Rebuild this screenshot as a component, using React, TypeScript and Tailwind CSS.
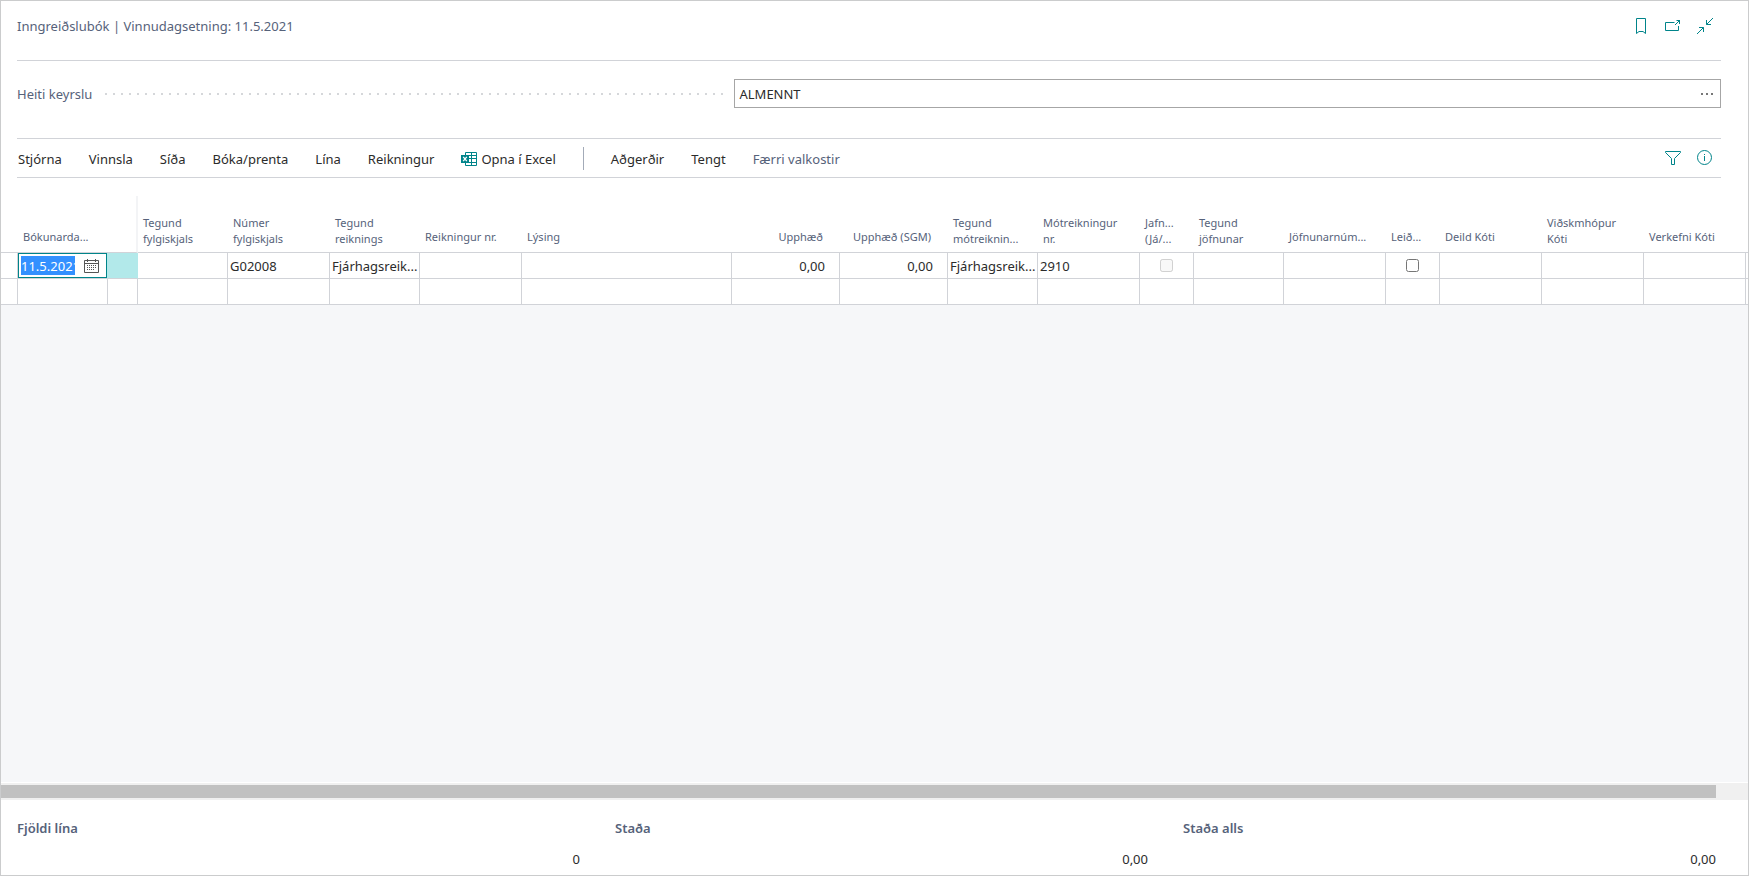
import React from 'react';

interface Column {
  width: string;
  lines: string[];
  align?: 'right';
}

const columns: Column[] = [
  { width: 'w-[90px]', lines: ['Bókunarda...'] },
  { width: 'w-[30px]', lines: [] },
  { width: 'w-[90px]', lines: ['Tegund', 'fylgiskjals'] },
  { width: 'w-[102px]', lines: ['Númer', 'fylgiskjals'] },
  { width: 'w-[90px]', lines: ['Tegund', 'reiknings'] },
  { width: 'w-[102px]', lines: ['Reikningur nr.'] },
  { width: 'w-[210px]', lines: ['Lýsing'] },
  { width: 'w-[108px]', lines: ['Upphæð'], align: 'right' },
  { width: 'w-[108px]', lines: ['Upphæð (SGM)'], align: 'right' },
  { width: 'w-[90px]', lines: ['Tegund', 'mótreiknin...'] },
  { width: 'w-[102px]', lines: ['Mótreikningur', 'nr.'] },
  { width: 'w-[54px]', lines: ['Jafn...', '(Já/...'] },
  { width: 'w-[90px]', lines: ['Tegund', 'jöfnunar'] },
  { width: 'w-[102px]', lines: ['Jöfnunarnúm...'] },
  { width: 'w-[54px]', lines: ['Leið...'] },
  { width: 'w-[102px]', lines: ['Deild Kóti'] },
  { width: 'w-[102px]', lines: ['Viðskmhópur', 'Kóti'] },
  { width: 'w-[102px]', lines: ['Verkefni Kóti'] },
];

const totals = [
  { label: 'Fjöldi lína', value: '0' },
  { label: 'Staða', value: '0,00' },
  { label: 'Staða alls', value: '0,00' },
];

const iconProps = { fill: 'none', stroke: 'currentColor', strokeWidth: 1 };

const BookmarkIcon = () => (
  <svg width="16" height="16" viewBox="0 0 16 16" {...iconProps}>
    <path d="M3.5.5h9v15L10 13.5H6l-2.5 2z" />
  </svg>
);

const OpenIcon = () => (
  <svg width="16" height="16" viewBox="0 0 16 16" {...iconProps}>
    <path d="M9.5 4.5h-9v8h13V8M10 7l5-5M11.5 2.5h3V6" />
  </svg>
);

const CollapseIcon = () => (
  <svg width="16" height="16" viewBox="0 0 16 16" {...iconProps}>
    <path d="M16 0L9.5 6.5M9.5 2v4.5H14M0 16l6.500-6.500M2 9.5h4.5V14" />
  </svg>
);

const FilterIcon = () => (
  <svg width="16" height="16" viewBox="0 0 16 16" {...iconProps}>
    <path d="M.5 1.5h15v1l-6 6v6h-3v-6l-6-6z" />
  </svg>
);

const InfoIcon = () => (
  <svg width="16" height="16" viewBox="0 0 16 16" {...iconProps}>
    <circle cx="7.500" cy="7.500" r="7" />
    <path d="M7.5 6v5M7.5 4v1" />
  </svg>
);

const ExcelIcon = () => (
  <svg width="16" height="14" viewBox="0 0 16 14" className="text-[#00848a]">
    <path d="M4.5.5h11v13h-11zM4.5 3.500h11M4.5 6.500h11M4.5 10.5h11M10.5.5v13" {...iconProps} />
    <path d="M0 3h8v8H0z" fill="currentColor" />
    <path d="M2.2 4.8l3.6 4.400M5.8 4.800L2.200 9.200" stroke="#fff" strokeWidth="1.3" />
  </svg>
);

const CalendarIcon = () => (
  <svg width="16" height="14" viewBox="0 0 16 14" fill="none" stroke="#555">
    <path d="M.5 1.5h14v12H.5zM.5 4.5h14M3.5 0v3M11.5 0v3" />
    <path d="M3 6.5h10M3 8.5h10M3 10.5h8" strokeDasharray="1 1" />
  </svg>
);

interface MenuButtonProps {
  children: React.ReactNode;
  muted?: boolean;
}

const MenuButton: React.FC<MenuButtonProps> = ({ children, muted }) => (
  <button className={muted ? 'flex items-center gap-1 text-[#56627a]' : 'flex items-center gap-1'}>{children}</button>
);

interface IconButtonProps {
  label: string;
  children: React.ReactNode;
}

const IconButton: React.FC<IconButtonProps> = ({ label, children }) => (
  <button aria-label={label} className="text-[#00848a]">
    {children}
  </button>
);

const cell = 'h-[26px] border-r border-b border-[#d1d3d8] p-0 px-[2px] whitespace-nowrap';
const highlighted = 'h-[26px] border-r border-b border-r-[#b2e9ea] border-b-[#d1d3d8] bg-[#b2e9ea] p-0';

const JournalLines = () => (
  <table className="w-full table-fixed border-separate border-spacing-0">
    <colgroup>
      <col className="w-[17px]" />
      {columns.map((c, i) => (
        <col key={i} className={c.width} />
      ))}
      <col />
    </colgroup>
    <thead>
      <tr className="text-[11px] text-[#56627a]">
        <th className="border-b border-[#d1d3d8] p-0" />
        {columns.map((c, i) => (
          <th
            key={i}
            className={
              'h-[57px] border-b border-b-[#d1d3d8] p-0 pb-[5px] align-bottom font-normal whitespace-nowrap ' +
              (c.align === 'right' ? 'pr-[17px] text-right ' : 'pl-[5px] text-left ') +
              (i === 1 ? 'border-r-2 border-r-[#f3f4f6] ' : '') +
              (c.lines.length > 1 ? 'leading-4' : 'leading-5')
            }
          >
            {c.lines.map((line) => (
              <span key={line} className="block">
                {line}
              </span>
            ))}
          </th>
        ))}
        <th className="border-b border-[#d1d3d8] p-0" />
      </tr>
    </thead>
    <tbody>
      <tr>
        <td className={cell} />
        <td className="h-[26px] border-r border-b border-r-[#b2e9ea] border-b-[#d1d3d8] p-0">
          <div className="flex h-[25px] items-center justify-between border border-[#00848a] pr-[6px] pl-[2px]">
            <input
              aria-label="Bókunardagsetning"
              defaultValue="11.5.2021"
              className="h-[19px] w-[54px] bg-[#3390ff] text-white outline-none"
            />
            <button aria-label="Velja dagsetningu">
              <CalendarIcon />
            </button>
          </div>
        </td>
        <td className={highlighted} />
        <td className={cell} />
        <td className={cell}>G02008</td>
        <td className={cell}>Fjárhagsreik...</td>
        <td className={cell} />
        <td className={cell} />
        <td className={cell + ' text-right'}>
          <span className="pr-3">0,00</span>
        </td>
        <td className={cell + ' text-right'}>
          <span className="pr-3">0,00</span>
        </td>
        <td className={cell}>Fjárhagsreik...</td>
        <td className={cell}>2910</td>
        <td className={cell}>
          <input type="checkbox" disabled aria-label="Jafnað (Já/Nei)" className="mx-auto block size-[13px]" />
        </td>
        <td className={cell} />
        <td className={cell} />
        <td className={cell}>
          <input type="checkbox" aria-label="Leiðrétting" className="mx-auto block size-[13px]" />
        </td>
        <td className={cell} />
        <td className={cell} />
        <td className={cell} />
        <td className="border-b border-[#d1d3d8] p-0" />
      </tr>
      <tr>
        <td className={cell} />
        {columns.map((_, i) => (
          <td key={i} className={cell} />
        ))}
        <td className="border-b border-[#d1d3d8] p-0" />
      </tr>
    </tbody>
  </table>
);

const App: React.FC = () => {
  return (
    <div className="flex h-screen flex-col overflow-hidden border border-[#cbcccd] bg-white font-['Noto_Sans',sans-serif] text-[13px] leading-5 text-[#2b2b2b]">
      <div className="mr-[27px] ml-4">
        <header className="flex h-[60px] items-start justify-between border-b border-[#d1d3d8] pt-[15px] text-[#56627a]">
          <h1>Inngreiðslubók | Vinnudagsetning: 11.5.2021</h1>
          <div className="flex gap-4 pt-[2px] pr-2">
            <IconButton label="Bókamerki">
              <BookmarkIcon />
            </IconButton>
            <IconButton label="Opna í nýjum glugga">
              <OpenIcon />
            </IconButton>
            <IconButton label="Minnka">
              <CollapseIcon />
            </IconButton>
          </div>
        </header>

        <div className="grid grid-cols-[8fr_11fr] items-center py-[18px]">
          <div className="flex items-center">
            <label htmlFor="batch-name" className="text-[#56627a]">
              Heiti keyrslu
            </label>
            <div className="mr-2 ml-[13px] h-[2px] flex-1 bg-[linear-gradient(to_right,#d5d7da_2px,transparent_2px)] bg-[length:8px_2px] bg-repeat-x" />
          </div>
          <div className="flex h-[29px] items-center border border-[#a6a6a6] px-1">
            <input id="batch-name" defaultValue="ALMENNT" className="min-w-0 flex-1 outline-none" />
            <button aria-label="Fletta upp" className="mr-px">
              <svg width="16" height="4" viewBox="0 0 16 4" fill="#777">
                <path d="M2 1h2v2H2zM7 1h2v2H7zM12 1h2v2h-2z" />
              </svg>
            </button>
          </div>
        </div>

        <nav className="mt-3 flex h-10 items-center justify-between border-y border-[#d1d3d8]">
          <div className="flex items-center gap-[27px] pt-px pl-px">
            <MenuButton>Stjórna</MenuButton>
            <MenuButton>Vinnsla</MenuButton>
            <MenuButton>Síða</MenuButton>
            <MenuButton>Bóka/prenta</MenuButton>
            <MenuButton>Lína</MenuButton>
            <MenuButton>Reikningur</MenuButton>
            <MenuButton>
              <ExcelIcon />
              Opna í Excel
            </MenuButton>
            <div className="h-[23px] w-px bg-[#a3abb8]" />
            <MenuButton>Aðgerðir</MenuButton>
            <MenuButton>Tengt</MenuButton>
            <MenuButton muted>Færri valkostir</MenuButton>
          </div>
          <div className="flex gap-4 pr-2">
            <IconButton label="Sía">
              <FilterIcon />
            </IconButton>
            <IconButton label="Upplýsingar">
              <InfoIcon />
            </IconButton>
          </div>
        </nav>
      </div>

      <main className="flex min-h-0 flex-1 flex-col bg-[#f6f7f9]">
        <div className="bg-white pt-[18px]">
          <JournalLines />
        </div>
      </main>

      <div className="border-t border-white bg-[#f0f0f0] py-[2px]">
        <div className="mr-8 h-[13px] bg-[#c1c1c1]" />
      </div>

      <footer className="mr-[27px] ml-4 grid grid-cols-3 pt-[18px] pb-[6px]">
        {totals.map((t, i) => (
          <div key={t.label} className={i === 0 ? 'pr-[5px]' : 'pr-[5px] pl-[30px]'}>
            <div className="font-semibold text-[#56627a]">{t.label}</div>
            <div className="mt-[11px] text-right">{t.value}</div>
          </div>
        ))}
      </footer>
    </div>
  );
};

export default App;
